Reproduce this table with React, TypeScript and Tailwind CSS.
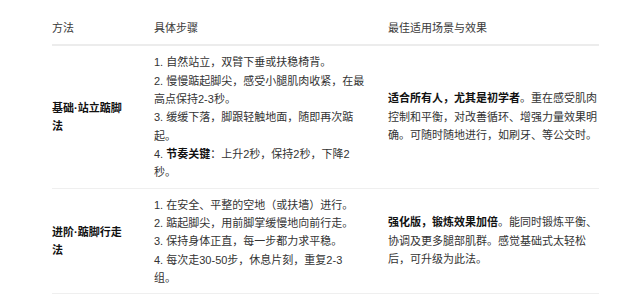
import React from 'react';

type Row = {
  method: string;
  steps: React.ReactNode[];
  effect: React.ReactNode;
};

const rows: Row[] = [
  {
    method: '基础·站立踮脚法',
    steps: [
      '1. 自然站立，双臂下垂或扶稳椅背。',
      '2. 慢慢踮起脚尖，感受小腿肌肉收紧，在最高点保持2-3秒。',
      '3. 缓缓下落，脚跟轻触地面，随即再次踮起。',
      <>
        4. <strong className="font-bold text-[#111]">节奏关键</strong>：上升2秒，保持2秒，下降2秒。
      </>,
    ],
    effect: (
      <>
        <strong className="font-bold text-[#111]">适合所有人，尤其是初学者</strong>。重在感受肌肉控制和平衡，对改善循环、增强力量效果明确。可随时随地进行，如刷牙、等公交时。
      </>
    ),
  },
  {
    method: '进阶·踮脚行走法',
    steps: [
      '1. 在安全、平整的空地（或扶墙）进行。',
      '2. 踮起脚尖，用前脚掌缓慢地向前行走。',
      '3. 保持身体正直，每一步都力求平稳。',
      <>
        4. 每次走30-50步，休息片刻，重复2-3
        <br />
        组。
      </>,
    ],
    effect: (
      <>
        <strong className="font-bold text-[#111]">强化版，锻炼效果加倍</strong>。能同时锻炼平衡、协调及更多腿部肌群。感觉基础式太轻松后，可升级为此法。
      </>
    ),
  },
];

export default function App() {
  return (
    <div
      className="min-h-screen bg-white pl-[52px] pt-[10px] text-[11px] leading-[18.33px] text-[#333]"
      style={{ fontFamily: '"Liberation Sans", "Noto Sans CJK SC", sans-serif' }}
    >
      <div className="w-[547px]">
        {/* Header */}
        <div className="grid grid-cols-[102px_234px_211px] border-b-2 border-[#ececec] pt-[9px] pb-[7px] text-[#3a3a3a]">
          <div>方法</div>
          <div>具体步骤</div>
          <div>最佳适用场景与效果</div>
        </div>

        {/* Rows */}
        {rows.map((row, i) => (
          <div
            key={i}
            className="grid grid-cols-[102px_234px_211px] border-b border-[#efefef]"
          >
            <div className="flex items-center pr-[28px] font-bold text-[#111]">
              {row.method}
            </div>
            <div className="pt-[7px] pb-[6px] pr-[20px]">
              {row.steps.map((s, j) => (
                <div key={j}>{s}</div>
              ))}
            </div>
            <div className="flex items-center">
              <p>{row.effect}</p>
            </div>
          </div>
        ))}
      </div>
    </div>
  );
}
